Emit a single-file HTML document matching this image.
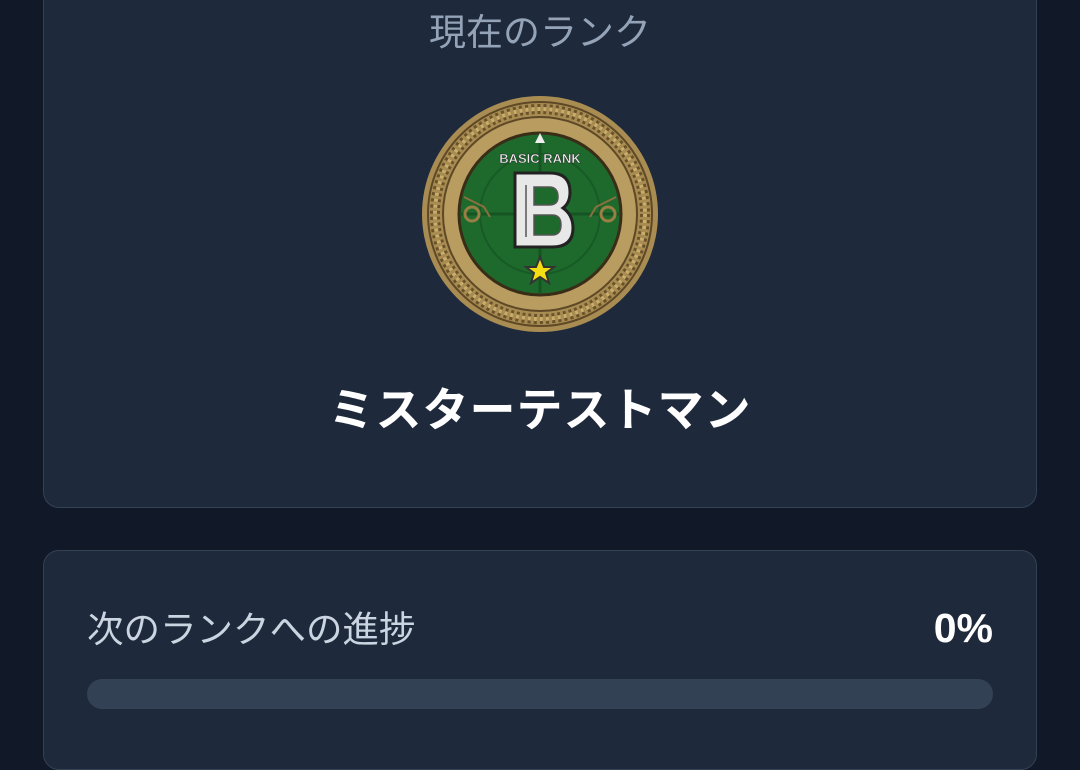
<!DOCTYPE html>
<html><head><meta charset="utf-8"><style>
html,body{margin:0;padding:0;width:1080px;height:720px;overflow:hidden;background:#111827;font-family:"Liberation Sans","Noto Sans CJK JP",sans-serif;}
.card{position:absolute;left:43px;width:994px;background:#1e293b;border:1px solid #334155;border-radius:16px;box-sizing:border-box;}
#c1{top:-30px;height:538px;}
#c2{top:550px;height:220px;}
.t1{position:absolute;top:11px;left:0;width:1080px;text-align:center;color:#94a3b8;font-size:37px;line-height:44px;}
.name{position:absolute;top:382px;left:0;width:1080px;text-align:center;color:#fff;font-size:46px;font-weight:bold;line-height:56px;letter-spacing:1px;}
.lab{position:absolute;left:87px;top:608px;color:#cbd5e1;font-size:36.5px;line-height:44px;}
.pct{position:absolute;right:87px;top:604px;color:#fff;font-size:41px;font-weight:bold;line-height:48px;}
.bar{position:absolute;left:87px;top:679px;width:906px;height:30px;border-radius:15px;background:#334155;}
</style></head><body>
<div class="card" id="c1"></div>
<div class="card" id="c2"></div>
<div class="t1">現在のランク</div>
<svg style="position:absolute;left:420px;top:95px" width="240" height="238" viewBox="0 0 240 238">
<circle cx="120" cy="119" r="118" fill="#a88c52"/>
<circle cx="120" cy="119" r="112" fill="none" stroke="#5e4826" stroke-width="2"/>
<circle cx="120" cy="119" r="105" fill="none" stroke="#6a5229" stroke-width="10" stroke-dasharray="3 3"/>
<circle cx="120" cy="119" r="105" fill="none" stroke="#c9ad6c" stroke-width="4" stroke-dasharray="3 3"/>
<circle cx="120" cy="119" r="97" fill="#b89c60" stroke="#5e4826" stroke-width="2"/>
<circle cx="120" cy="119" r="81" fill="#1d6a2c" stroke="#3a2d18" stroke-width="3"/>
<circle cx="120" cy="119" r="60" fill="none" stroke="#185a26" stroke-width="2"/>
<path d="M120 40 V198 M40 119 H200" stroke="#175424" stroke-width="3"/>
<polygon points="120,38 125,48 115,48" fill="#eee"/>
<text x="120" y="68" text-anchor="middle" font-family="Liberation Sans" font-weight="bold" font-size="13" fill="#eee" stroke="#222" stroke-width="0.4">BASIC RANK</text>
<path d="M95 78 H130 Q150 78 150 97 Q150 108 143 113 Q153 120 153 133 Q153 152 132 152 H95 Z" fill="#e8e8e8" stroke="#222" stroke-width="3"/>
<path d="M106 90 V142 M114 92 H129 Q138 92 138 102 Q138 110 129 110 H114 Z M114 120 H132 Q141 120 141 130 Q141 140 132 140 H114 Z" fill="#1d6a2c" stroke="#555" stroke-width="1.5"/>
<polygon points="120,162 124,172 134,172 126,178 129,188 120,182 111,188 114,178 106,172 116,172" fill="#f4dd10" stroke="#333" stroke-width="2"/>
<circle cx="52" cy="119" r="7" fill="none" stroke="#9a7f45" stroke-width="3"/>
<circle cx="188" cy="119" r="7" fill="none" stroke="#9a7f45" stroke-width="3"/>
<path d="M44 102 L64 112 L70 122 M196 102 L176 112 L170 122" fill="none" stroke="#8a7040" stroke-width="2"/>
</svg>
<div class="name">ミスターテストマン</div>
<div class="lab">次のランクへの進捗</div>
<div class="pct">0%</div>
<div class="bar"></div>
</body></html>
